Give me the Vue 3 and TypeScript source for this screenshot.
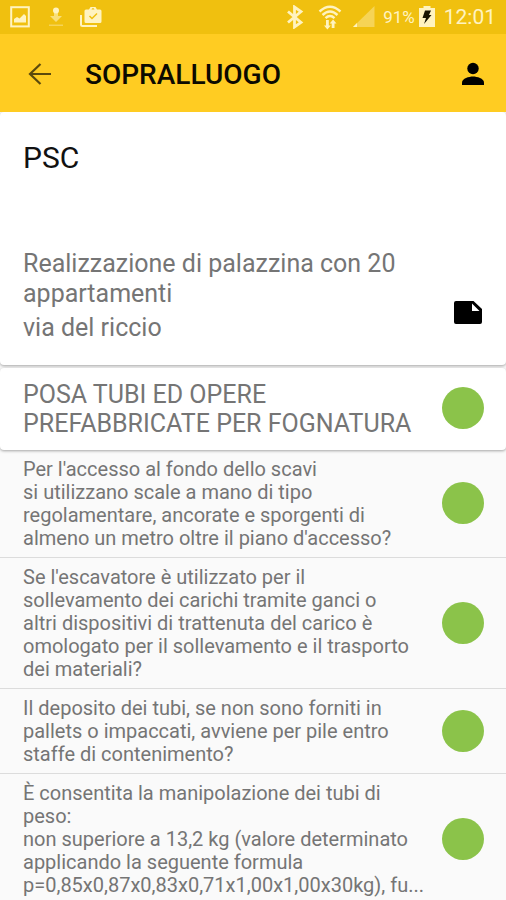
<script setup lang="ts">
interface Question {
  id: number
  text: string
}

const questions: Question[] = [
  {
    id: 1,
    text: "Per l'accesso al fondo dello scavi\nsi utilizzano scale a mano di tipo regolamentare, ancorate e sporgenti di almeno un metro oltre il piano d'accesso?",
  },
  {
    id: 2,
    text: "Se l'escavatore è utilizzato per il sollevamento dei carichi tramite ganci o\naltri dispositivi di trattenuta del carico è omologato per il sollevamento e il trasporto dei materiali?",
  },
  {
    id: 3,
    text: 'Il deposito dei tubi, se non sono forniti in pallets o impaccati, avviene per pile entro staffe di contenimento?',
  },
  {
    id: 4,
    text: 'È consentita la manipolazione dei tubi di peso:\nnon superiore a 13,2 kg (valore determinato applicando la seguente formula p=0,85x0,87x0,83x0,71x1,00x1,00x30kg), fu...',
  },
]
</script>

<template>
  <div class="screen">
    <div class="status-bar">
      <div class="status-group left">
        <svg class="icon-photo" width="20" height="22" viewBox="0 0 20 22" aria-hidden="true">
          <rect x="1.2" y="1.2" width="17.6" height="19.2" fill="none" stroke="currentColor" stroke-width="2" />
          <path d="M4 16.5V13l3-2 2.5 1.5L14 8l2 2v6.500z" fill="currentColor" />
        </svg>
        <svg class="icon-download" width="16" height="20" viewBox="0 0 16 20" aria-hidden="true">
          <circle cx="8" cy="3.500" r="3" fill="currentColor" />
          <path d="M6 6h4v3h4l-6 6-6-6h4z" fill="currentColor" opacity=".6" />
          <path d="M1 17.500h14v1.500H1z" fill="currentColor" opacity=".4" />
        </svg>
        <svg width="22" height="22" viewBox="0 0 22 22" aria-hidden="true">
          <path d="M1 9v9.500a1.500 1.500 0 0 0 1.500 1.500H17" fill="none" stroke="currentColor" stroke-width="2" />
          <path fill-rule="evenodd" fill="currentColor" d="M9 3.500 10.500 1h5L17 3.500h3a1.500 1.500 0 0 1 1.500 1.500v10.500A1.500 1.500 0 0 1 20 17H6a1.500 1.500 0 0 1-1.500-1.500V5A1.500 1.500 0 0 1 6 3.500zM11.500 3.500h3l-.7-1.200h-1.600z" />
          <path d="m9.500 10 2.500 2.500 5-5" fill="none" stroke="#f0c00f" stroke-width="1.500" />
        </svg>
      </div>
      <div class="status-group right">
        <svg width="18" height="24" viewBox="0 0 18 24" aria-hidden="true">
          <path d="m2 6.500 13 11L8.500 22V2L15 6.500l-13 11" fill="none" stroke="currentColor" stroke-width="2.800" />
        </svg>
        <svg class="icon-wifi" width="24" height="26" viewBox="0 0 24 26" aria-hidden="true">
          <g fill="none" stroke="currentColor" stroke-width="2.400">
            <path d="M1.500 7.500Q12-2 22.500 7.500" />
            <path d="M4.500 11Q12 4 19.500 11" />
            <path d="M7.500 14.200Q12 10 16.500 14.200" />
          </g>
          <path fill="currentColor" d="M8 16h2.800v5.500h2L9.400 25.500l-3.400-4H8zM13.700 24h2.800v-4.500h2L15.100 15.500l-3.400 4h2z" />
        </svg>
        <svg class="icon-signal" width="23" height="22" viewBox="0 0 23 22" aria-hidden="true">
          <path d="M22.500 0v21H1z" fill="currentColor" opacity=".4" />
          <path d="M5 17v4H1z" fill="currentColor" />
        </svg>
        <span class="battery-level">91%</span>
        <svg class="icon-battery" width="16" height="22" viewBox="0 0 16 22" aria-hidden="true">
          <path d="M4.500 0h7v2H16v19H0V2h4.500z" fill="currentColor" />
          <path d="M6 4.500h6l-2 4.500h2.500L5 18l2-6H3.500z" fill="#181400" />
        </svg>
        <span class="clock">12:01</span>
      </div>
    </div>

    <header class="app-bar">
      <button class="icon-button back" type="button" aria-label="Indietro">
        <svg width="24" height="24" viewBox="0 0 24 24" aria-hidden="true">
          <path d="M23 12H2M12.500 2 2 12l10.500 10" fill="none" stroke="#5c4a0c" stroke-width="2.200" />
        </svg>
      </button>
      <h1 class="title">SOPRALLUOGO</h1>
      <button class="icon-button" type="button" aria-label="Profilo">
        <svg width="24" height="24" viewBox="0 0 24 24" aria-hidden="true">
          <circle cx="12" cy="6.500" r="5.700" />
          <path d="M1 23v-2.500c0-4 7-6 11-6s11 2 11 6V23z" />
        </svg>
      </button>
    </header>

    <main class="content">
      <section class="card plan">
        <h2 class="plan-name">PSC</h2>
        <div class="plan-row">
          <div class="plan-info">
            <p>Realizzazione di palazzina con 20 appartamenti</p>
            <p>via del riccio</p>
          </div>
          <button class="icon-button note" type="button" aria-label="Nota">
            <svg width="28" height="23" viewBox="0 0 28 23" aria-hidden="true">
              <path fill-rule="evenodd" d="M2 0h17.500L28 8v13a2 2 0 0 1-2 2H2a2 2 0 0 1-2-2V2a2 2 0 0 1 2-2zM18 2.500V10h7.500z" />
            </svg>
          </button>
        </div>
      </section>

      <section class="card phase">
        <h3 class="phase-name">POSA TUBI ED OPERE PREFABBRICATE PER FOGNATURA</h3>
        <button class="dot" type="button" aria-label="Stato"></button>
      </section>

      <ul class="questions">
        <li v-for="question in questions" :key="question.id" class="question">
          <p class="question-text">{{ question.text }}</p>
          <button class="dot" type="button" aria-label="Stato"></button>
        </li>
      </ul>
    </main>
  </div>
</template>

<style>
body {
  background: #fafafa;
}
</style>

<style scoped>
.screen {
  display: flex;
  flex-direction: column;
  height: 100vh;
  overflow: hidden;
  background: #fafafa;
  color: #757575;
  font-family: Roboto, "Liberation Sans", sans-serif;
}

h1,
h2,
h3,
p,
ul {
  margin: 0;
  padding: 0;
  font-weight: 400;
}

svg {
  display: block;
  flex: none;
}

.status-bar {
  display: flex;
  flex: none;
  justify-content: space-between;
  height: 34px;
  padding: 0 10px;
  background: #f0c00f;
  color: #fff3c0;
}

.status-group {
  display: flex;
  align-items: center;
}

.left {
  gap: 16px;
}

.icon-download {
  margin-left: 2px;
}

.icon-wifi {
  margin-left: 14px;
}

.icon-signal {
  margin-left: 10px;
}

.battery-level {
  margin-left: 8px;
  font-size: 17px;
}

.icon-battery {
  margin-left: 4px;
}

.clock {
  margin-left: 9px;
  font-size: 21px;
}

.app-bar {
  display: flex;
  flex: none;
  align-items: center;
  box-sizing: border-box;
  height: 78px;
  padding: 2px 21px 0 28px;
  background: #ffcc22;
}

.icon-button {
  flex: none;
  padding: 0;
  border: 0;
  background: none;
  cursor: pointer;
}

.title {
  flex: 1;
  margin-left: 33px;
  padding-top: 2px;
  color: #0c0a00;
  font-size: 28px;
  font-weight: 500;
  line-height: 32px;
}

.content {
  flex: 1;
  min-height: 0;
  overflow-y: auto;
  scrollbar-width: none;
}

.card {
  border-radius: 4px;
  background: #fff;
  box-shadow: 0 1px 3px rgba(0, 0, 0, 0.35);
}

.plan {
  padding: 28px 24px 22px 23px;
}

.plan-name {
  color: #111;
  font-size: 30px;
  line-height: 36px;
}

.plan-row {
  display: flex;
  align-items: flex-end;
  justify-content: space-between;
  margin-top: 73px;
}

.plan-info {
  display: grid;
  gap: 4px;
  max-width: 396px;
  font-size: 25px;
  line-height: 30px;
}

.note {
  margin-bottom: 19px;
}

.phase {
  display: flex;
  align-items: center;
  justify-content: space-between;
  gap: 20px;
  margin-top: 3px;
  padding: 12px 22px 12px 23px;
}

.phase-name {
  flex: 1;
  font-size: 25px;
  line-height: 29px;
}

.dot {
  flex: none;
  width: 42px;
  height: 42px;
  margin-bottom: 2px;
  padding: 0;
  border: 0;
  border-radius: 50%;
  background: #8bc34a;
  cursor: pointer;
}

.questions {
  list-style: none;
}

.question {
  display: flex;
  align-items: center;
  justify-content: space-between;
  gap: 16px;
  padding: 8px 22px 7px 23px;
  border-bottom: 1px solid #dcdcdc;
}

.question-text {
  flex: 1;
  font-size: 20px;
  line-height: 23px;
  white-space: pre-line;
}
</style>
